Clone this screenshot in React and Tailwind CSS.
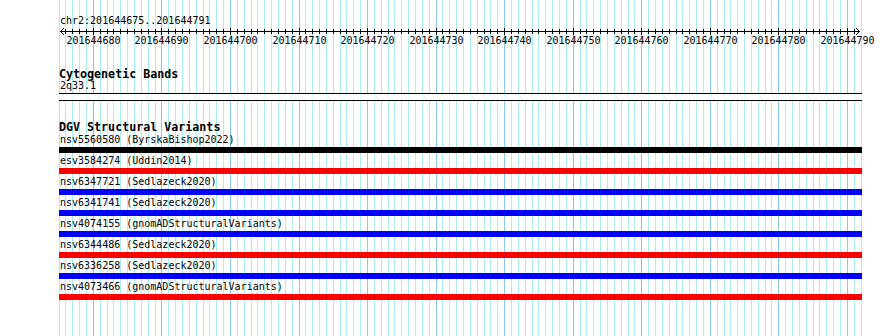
const START = 201644675;
const END = 201644791;
const BASES = END - START + 1; // 117
const X0 = 58.6;
const STEP = 802 / BASES;

const variants = [
  { id: "nsv5560580", src: "ByrskaBishop2022", bar: "bg-black" },
  { id: "esv3584274", src: "Uddin2014", bar: "bg-[#ff0000]" },
  { id: "nsv6347721", src: "Sedlazeck2020", bar: "bg-[#0000ff]" },
  { id: "nsv6341741", src: "Sedlazeck2020", bar: "bg-[#0000ff]" },
  { id: "nsv4074155", src: "gnomADStructuralVariants", bar: "bg-[#0000ff]" },
  { id: "nsv6344486", src: "Sedlazeck2020", bar: "bg-[#ff0000]" },
  { id: "nsv6336258", src: "Sedlazeck2020", bar: "bg-[#0000ff]" },
  { id: "nsv4073466", src: "gnomADStructuralVariants", bar: "bg-[#ff0000]" },
];

const positions = Array.from({ length: BASES + 1 }, (_, i) => ({
  x: Math.round(X0 + i * STEP),
  base: START + i,
}));

function BaseGrid() {
  return (
    <svg
      className="absolute left-0 top-0"
      width="890"
      height="336"
      shapeRendering="crispEdges"
    >
      {positions.map((p) => (
        <rect
          key={p.base}
          x={p.x}
          y="0"
          width="1"
          height="336"
          fill={p.base % 10 === 0 ? "#86c8ee" : "#aaeef2"}
        />
      ))}
    </svg>
  );
}

function Ruler() {
  const inner = positions.slice(1, -1);
  return (
    <svg
      width="803"
      height="20"
      viewBox="59 27 803 20"
      className="block overflow-visible"
    >
      <g shapeRendering="crispEdges" fill="#000">
        <rect x="60" y="31" width="800" height="1" />
        {inner.map((p) =>
          p.base % 10 === 0 ? (
            <rect key={p.base} x={p.x} y="28" width="1" height="7" />
          ) : (
            <rect key={p.base} x={p.x} y="29" width="1" height="5" />
          )
        )}
      </g>
      <polyline points="64,28 60.5,31.5 64,35" fill="none" stroke="#000" strokeWidth="1" />
      <polyline points="856,28 859.5,31.5 856,35" fill="none" stroke="#000" strokeWidth="1" />
      {inner
        .filter((p) => p.base % 10 === 0)
        .map((p) => (
          <text
            key={p.base}
            x={p.x + 0.5}
            y="44"
            textAnchor="middle"
            fontSize="10"
            fontFamily="'DejaVu Sans Mono', monospace"
            fill="#000"
          >
            {p.base}
          </text>
        ))}
    </svg>
  );
}

export default function App() {
  return (
    <div className="relative w-[890px] h-[336px] overflow-hidden bg-white text-black font-['DejaVu_Sans_Mono',monospace]">
      <BaseGrid />
      <div className="relative w-[862px] pl-[59px] pt-[15px]">
        <div className="h-[12px] leading-[12px] text-[10px] pl-[1px]">
          chr2:201644675..201644791
        </div>
        <Ruler />

        <div className="mt-[21px] h-[12px] leading-[12px] text-[11.67px] font-bold">
          Cytogenetic Bands
        </div>
        <div className="h-[12px] leading-[12px] text-[10px] pl-[1px]">2q33.1</div>
        <div className="mt-[1px] h-[8px] border-y border-black bg-white" />

        <div className="mt-[21px] h-[11px] leading-[11px] text-[11.67px] font-bold">
          DGV Structural Variants
        </div>
        <div className="flex flex-col">
          {variants.map((v) => (
            <div key={v.id} className="mb-[1px]">
              <div className="h-[14px] leading-[14px] text-[10px] pl-[1px] whitespace-pre">
                {v.id} ({v.src})
              </div>
              <div className={`h-[6px] ${v.bar}`} />
            </div>
          ))}
        </div>
      </div>
    </div>
  );
}
